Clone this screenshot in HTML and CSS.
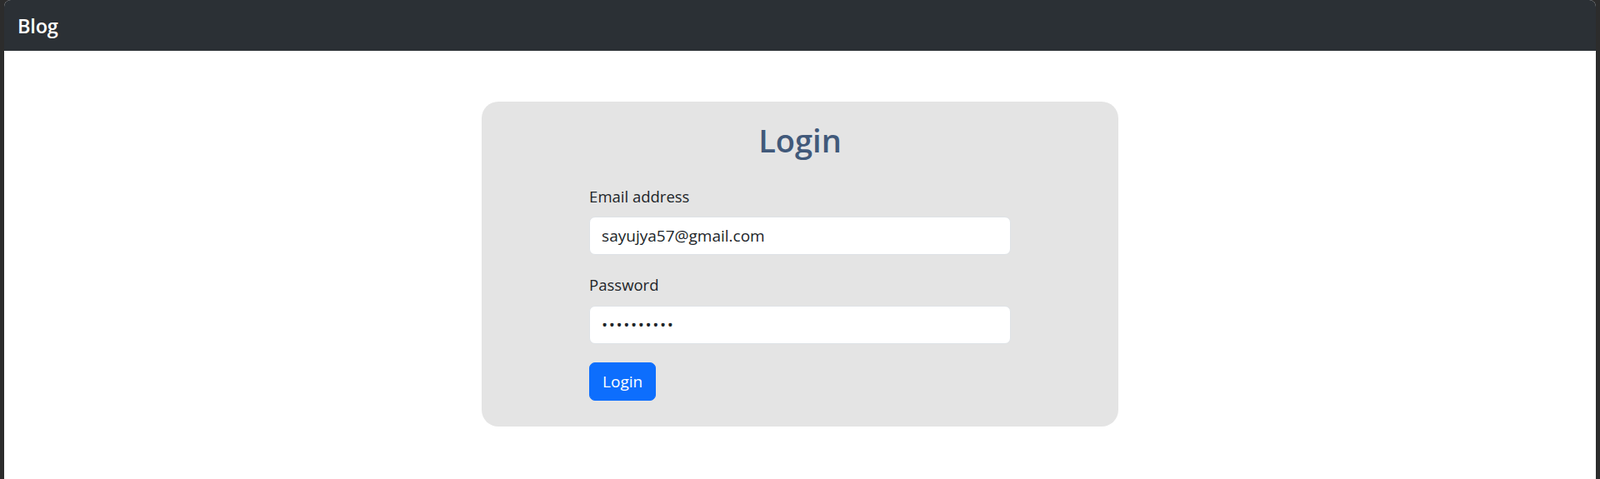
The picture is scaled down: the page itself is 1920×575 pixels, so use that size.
FILE: index.html
```html
<!DOCTYPE html>
<html lang="en">
<head>
<meta charset="utf-8">
<title>Blog - Login</title>
<link rel="stylesheet" href="styles.css">
</head>
<body>
<div class="app">
  <nav class="navbar">
    <a class="brand" href="#">Blog</a>
  </nav>
  <main class="main">
    <section class="card">
      <h2 class="title">Login</h2>
      <form class="form">
        <div class="group">
          <label class="label" for="email">Email address</label>
          <input class="control" id="email" type="email" value="sayujya57@gmail.com">
        </div>
        <div class="group">
          <label class="label" for="password">Password</label>
          <input class="control control-password" id="password" type="password" value="abcdefghij">
        </div>
        <button class="btn" type="button">Login</button>
      </form>
    </section>
  </main>
</div>
</body>
</html>
```
FILE: styles.css
```css
* { box-sizing: border-box; }
html, body { margin: 0; padding: 0; }
body {
  background: #2c2c2c;
  font-family: "Open Sans", "Noto Sans", sans-serif;
  color: #212529;
  height: 575px;
  overflow: hidden;
}
.app {
  margin: 0 5px;
  height: 575px;
  background: #ffffff;
  border-radius: 8px 8px 0 0;
  overflow: hidden;
}
.navbar {
  height: 61px;
  background: #2b3035;
  display: flex;
  align-items: center;
  padding: 0 14px;
}
.brand {
  color: #ffffff;
  text-decoration: none;
  font-size: 23.5px;
  font-weight: 600;
  padding-left: 2px;
  letter-spacing: -0.2px;
}
.main {
  padding-top: 61px;
}
.card {
  width: 40%;
  margin: 0 auto;
  background: #e4e4e4;
  border-radius: 20px;
  padding: 23px 0 31px;
}
.title {
  margin: 0 0 31px;
  text-align: center;
  font-size: 38px;
  line-height: 46px;
  font-weight: 600;
  color: #41597a;
}
.form {
  width: 66.2%;
  margin: 0 auto;
}
.group {
  margin-bottom: 22px;
}
.label {
  display: block;
  font-size: 18.5px;
  line-height: 28.8px;
  margin-bottom: 9.6px;
}
.control {
  display: block;
  width: 100%;
  height: 46px;
  padding: 0 14px;
  font-family: inherit;
  font-size: 19px;
  color: #212529;
  background: #ffffff;
  border: 1px solid #dee2e6;
  border-radius: 7px;
  outline: none;
}
.control-password {
  letter-spacing: 1.6px;
}
.btn {
  height: 46px;
  padding: 0 15px;
  font-family: inherit;
  font-size: 19px;
  color: #ffffff;
  background: #0d6efd;
  border: 1px solid #0d6efd;
  border-radius: 7px;
}
```
